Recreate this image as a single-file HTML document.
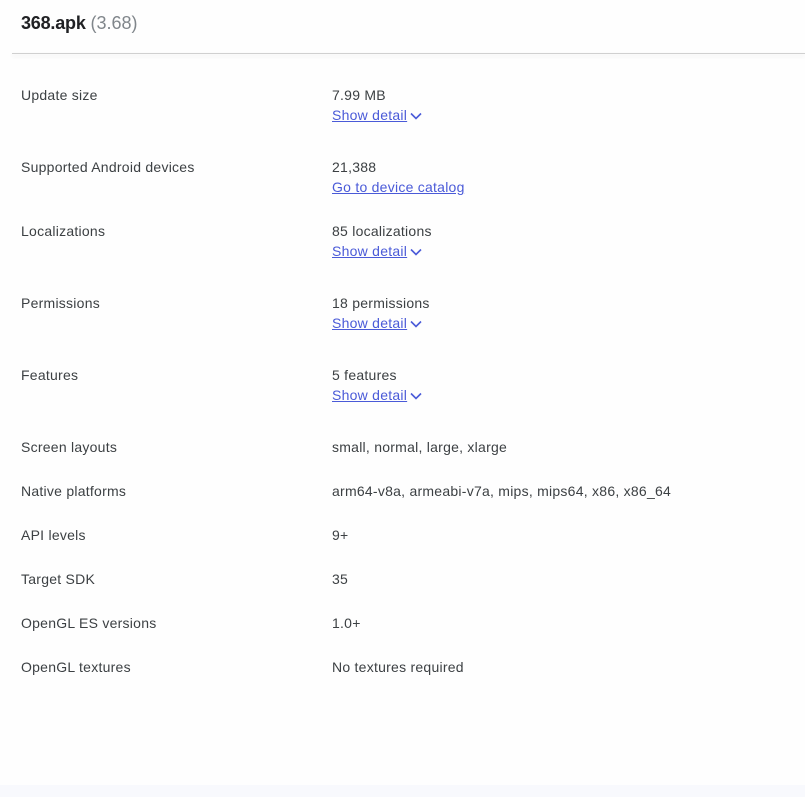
<!DOCTYPE html>
<html><head><style>
body{margin:0;width:805px;height:797px;background:#fefefe;font-family:"Liberation Sans",Arial,sans-serif;position:relative;overflow:hidden;color:#3c4043}
.t{position:absolute;left:21px;top:11px;font-size:18px;line-height:24px;color:#202124;font-weight:bold;letter-spacing:-0.2px}
.t span{color:#80868b;font-weight:normal;letter-spacing:0}
.hl{position:absolute;left:12px;right:0;top:53px;height:1px;background:#d0d0d0;box-shadow:0 2px 4px rgba(0,0,0,.12)}
.l,.v{position:absolute;font-size:14px;line-height:20px;white-space:nowrap;letter-spacing:0.25px}
.l{left:21px}.v{left:332px}
a{color:#4a5ad8;text-decoration:underline}
svg{vertical-align:middle;margin-left:3px}
.bot{position:absolute;left:0;right:0;top:785px;bottom:0;background:#f8f9fd}
</style></head><body>
<div class="t">368.apk <span>(3.68)</span></div>
<div class="hl"></div>
<div class="l" style="top:85px">Update size</div>
<div class="v" style="top:85px">7.99 MB<br><a>Show detail</a><svg width="12" height="8" viewBox="0 0 12 8"><path d="M1 1.5l5 5 5-5" stroke="#4a5ad8" stroke-width="1.6" fill="none"/></svg></div>
<div class="l" style="top:157px">Supported Android devices</div>
<div class="v" style="top:157px">21,388<br><a>Go to device catalog</a></div>
<div class="l" style="top:221px">Localizations</div>
<div class="v" style="top:221px">85 localizations<br><a>Show detail</a><svg width="12" height="8" viewBox="0 0 12 8"><path d="M1 1.5l5 5 5-5" stroke="#4a5ad8" stroke-width="1.6" fill="none"/></svg></div>
<div class="l" style="top:293px">Permissions</div>
<div class="v" style="top:293px">18 permissions<br><a>Show detail</a><svg width="12" height="8" viewBox="0 0 12 8"><path d="M1 1.5l5 5 5-5" stroke="#4a5ad8" stroke-width="1.6" fill="none"/></svg></div>
<div class="l" style="top:365px">Features</div>
<div class="v" style="top:365px">5 features<br><a>Show detail</a><svg width="12" height="8" viewBox="0 0 12 8"><path d="M1 1.5l5 5 5-5" stroke="#4a5ad8" stroke-width="1.6" fill="none"/></svg></div>
<div class="l" style="top:437px">Screen layouts</div>
<div class="v" style="top:437px">small, normal, large, xlarge</div>
<div class="l" style="top:481px">Native platforms</div>
<div class="v" style="top:481px">arm64-v8a, armeabi-v7a, mips, mips64, x86, x86_64</div>
<div class="l" style="top:525px">API levels</div>
<div class="v" style="top:525px">9+</div>
<div class="l" style="top:569px">Target SDK</div>
<div class="v" style="top:569px">35</div>
<div class="l" style="top:613px">OpenGL ES versions</div>
<div class="v" style="top:613px">1.0+</div>
<div class="l" style="top:657px">OpenGL textures</div>
<div class="v" style="top:657px">No textures required</div>
<div class="bot"></div>
</body></html>
